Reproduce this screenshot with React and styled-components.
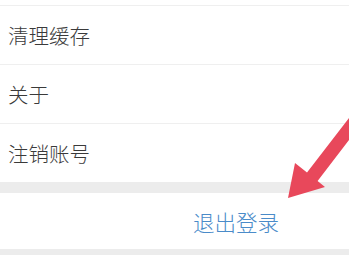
import React from "react";
import styled, { createGlobalStyle } from "styled-components";

const GlobalStyle = createGlobalStyle`
  html, body {
    margin: 0;
    padding: 0;
    background: #ffffff;
    font-family: "Noto Sans CJK SC", "Noto Sans", sans-serif;
  }
`;

const Page = styled.div`
  position: relative;
  width: 349px;
  height: 255px;
  overflow: hidden;
  background: #ffffff;
  padding-top: 5px;
  box-sizing: border-box;
`;

const List = styled.ul`
  list-style: none;
  margin: 0;
  padding: 0;
  border-top: 1px solid #efefef;
`;

const Row = styled.li`
  height: 58px;
  display: flex;
  align-items: center;
  padding-left: 8px;
  font-size: 20.5px;
  font-weight: 300;
  color: #3a3a3a;
  border-bottom: ${({ last }) => (last ? "none" : "1px solid #efefef")};
`;

const Gap = styled.div`
  height: 11px;
  background: #ececec;
`;

const Logout = styled.button`
  width: 100%;
  height: 56px;
  display: flex;
  align-items: center;
  padding: 0 0 0 193px;
  border: none;
  background: #ffffff;
  color: #4a8bc9;
  font-family: inherit;
  font-size: 21.5px;
  font-weight: 300;
`;

const Arrow = styled.svg`
  position: absolute;
  left: 0;
  top: 0;
  pointer-events: none;
`;

const items = ["清理缓存", "关于", "注销账号"];

function App() {
  return (
    <Page>
      <GlobalStyle />
      <List>
        {items.map((label, i) => (
          <Row key={label} last={i === items.length - 1}>
            {label}
          </Row>
        ))}
      </List>
      <Gap />
      <Logout>退出登录</Logout>
      <Gap />
      <Arrow width="349" height="255" viewBox="0 0 349 255">
        <polygon
          points="360,103.6 360,125.8 317.6,181 325,187 288,198 295,163 307,172.6"
          fill="#e8485b"
        />
      </Arrow>
    </Page>
  );
}

export default App;
